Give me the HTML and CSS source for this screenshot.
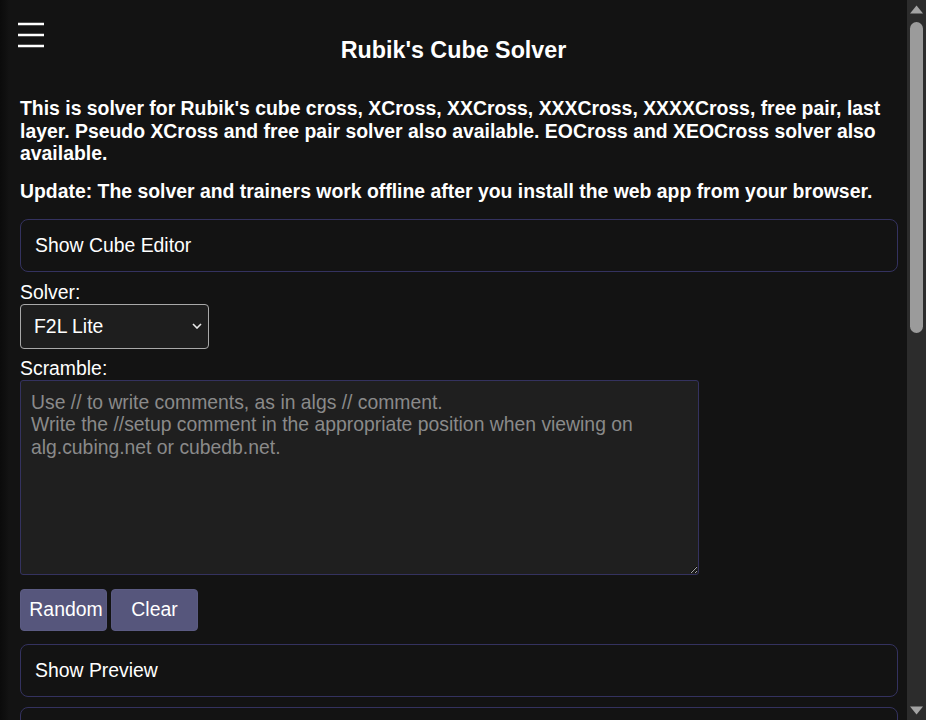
FILE: index.html
```html
<!DOCTYPE html>
<html lang="en">
<head>
<meta charset="utf-8">
<title>Rubik's Cube Solver</title>
<link rel="stylesheet" href="styles.css">
</head>
<body>
<button class="menu-btn" aria-label="Menu">
  <svg width="26" height="26" viewBox="0 0 26 26"><path d="M0 2h26M0 13h26M0 24h26" stroke="#fff" stroke-width="2.6" fill="none"/></svg>
</button>
<main class="page">
  <h1 class="title">Rubik's Cube Solver</h1>
  <p class="intro">This is solver for Rubik's cube cross, XCross, XXCross, XXXCross, XXXXCross, free pair, last layer. Pseudo XCross and free pair solver also available. EOCross and XEOCross solver also available.</p>
  <p class="intro update">Update: The solver and trainers work offline after you install the web app from your browser.</p>

  <div class="toggle">Show Cube Editor</div>

  <label class="field-label" for="solver">Solver:</label>
  <span class="select-wrap">
    <select id="solver" class="select">
      <option>F2L Lite</option>
    </select>
    <svg class="chev" width="10" height="6" viewBox="0 0 10 6"><path d="M1 1l4 4 4-4" stroke="#e8e8e8" stroke-width="1.6" fill="none"/></svg>
  </span>

  <label class="field-label scramble-label" for="scramble">Scramble:</label>
  <textarea id="scramble" class="scramble" placeholder="Use // to write comments, as in algs // comment.
Write the //setup comment in the appropriate position when viewing on alg.cubing.net or cubedb.net."></textarea>

  <div class="btn-row">
    <button class="btn btn-random">Random</button>
    <button class="btn">Clear</button>
  </div>

  <div class="toggle preview">Show Preview</div>
  <section class="panel" aria-label="Solver options"></section>
</main>
<div class="scrollbar" aria-hidden="true">
  <svg class="arrow" width="19" height="19" viewBox="0 0 19 19"><path d="M3 13.5L9.5 5.5 16 13.5z" fill="#a3a3a3"/></svg>
  <div class="track"><div class="thumb"></div></div>
  <svg class="arrow" width="19" height="19" viewBox="0 0 19 19"><path d="M3 5.5L9.5 13.5 16 5.5z" fill="#a3a3a3"/></svg>
</div>
</body>
</html>
```

FILE: styles.css
```css
:root {
  color-scheme: dark;
}
html {
  background: linear-gradient(to right, #0b0b0b 0, #0f0f0f 5px, #131313 9px) #131313;
}
body {
  margin: 0;
  padding-right: 19px;
  color: #ffffff;
  font-family: "Liberation Sans", Arial, sans-serif;
  font-size: 19.4px;
}
.menu-btn {
  position: absolute;
  left: 18px;
  top: 22px;
  padding: 0;
  margin: 0;
  border: 0;
  background: none;
  width: 26px;
  height: 26px;
  display: block;
}
.menu-btn svg { display: block; }
.page {
  padding: 36px 9px 40px 20px;
  display: flex;
  flex-direction: column;
  align-items: flex-start;
}
.title {
  align-self: stretch;
  margin: 0 -9px 0 -20px;
  text-align: center;
  font-size: 23.3px;
  font-weight: bold;
  line-height: 28px;
}
.intro {
  margin: 33px 0 0;
  font-weight: bold;
  line-height: 22.6px;
}
.update {
  margin-top: 15px;
}
.toggle {
  align-self: stretch;
  box-sizing: border-box;
  height: 53px;
  margin-top: 17px;
  padding: 0 14px;
  display: flex;
  align-items: center;
  border: 1px solid #34325f;
  border-radius: 8px;
}
.field-label {
  margin-top: 9px;
  line-height: 22.6px;
}
.scramble-label {
  margin-top: 8px;
}
.select-wrap {
  position: relative;
  display: block;
}
.select {
  appearance: none;
  -webkit-appearance: none;
  box-sizing: border-box;
  width: 189px;
  height: 45px;
  padding: 0 0 0 13px;
  background: #1e1e1e;
  color: #fff;
  border: 1px solid #a9a9a9;
  border-radius: 4px;
  font-family: inherit;
  font-size: 19.4px;
}
.chev {
  position: absolute;
  left: 172px;
  top: 19px;
}
.scramble {
  box-sizing: border-box;
  width: 679px;
  height: 195px;
  margin: 0;
  padding: 10px 10px;
  background: #1f1f1f;
  color: #fff;
  border: 1px solid #34325f;
  border-radius: 3px;
  font-family: inherit;
  font-size: 19.35px;
  line-height: 22.6px;
}
.scramble::placeholder {
  color: #8a8a8a;
  opacity: 1;
}
.btn-row {
  margin-top: 14px;
  display: flex;
  gap: 4px;
}
.btn {
  box-sizing: border-box;
  width: 87px;
  height: 42px;
  padding: 0;
  border: 1px solid #5b5b82;
  border-radius: 4px;
  background: #56567c;
  color: #fff;
  font-family: inherit;
  font-size: 19.4px;
}
.btn-random {
  padding-left: 5px;
}
.preview {
  margin-top: 13px;
}
.panel {
  align-self: stretch;
  margin-top: 10px;
  height: 400px;
  border: 1px solid #34325f;
  border-radius: 8px;
}
.scrollbar {
  position: fixed;
  top: 0;
  right: 0;
  bottom: 0;
  width: 19px;
  background: #2c2c2c;
  display: flex;
  flex-direction: column;
}
.arrow {
  display: block;
  flex: none;
}
.track {
  flex: 1;
  display: flex;
  justify-content: center;
}
.thumb {
  margin-top: 3px;
  width: 13px;
  height: 311px;
  border-radius: 6.5px;
  background: #9b9b9b;
}
```
